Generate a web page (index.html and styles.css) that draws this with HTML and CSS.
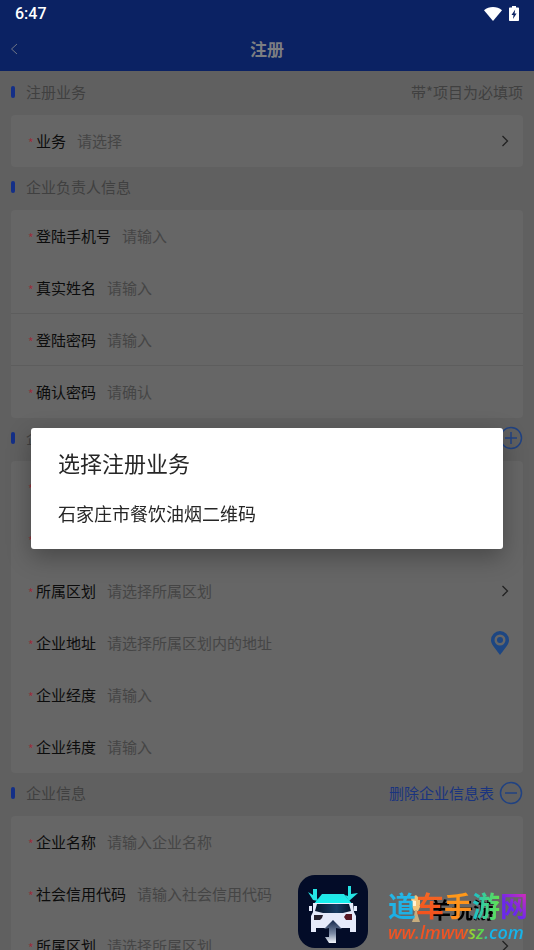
FILE: index.html
```
<!DOCTYPE html>
<html lang="zh-CN">

<head>
    <meta charset="UTF-8">
    <meta name="viewport" content="width=device-width, initial-scale=1.0">
    <title>注册</title>
    <link rel="stylesheet" href="styles.css">
</head>

<body>
    <div class="app">
        <header class="header">
            <div class="status">
                <span class="time">6:47</span>
                <svg class="wifi" viewBox="0 0 18 14"><path d="M0 3.2C5-1 13-1 18 3.2L9 14z"/></svg>
                <svg class="battery" viewBox="0 0 10 15"><path d="M3 0h4v1.5h2c.6 0 1 .4 1 1V14c0 .6-.4 1-1 1H1c-.6 0-1-.4-1-1V2.500c0-.6.4-1 1-1h2z"/><path class="bolt" d="M6.200 3.500 2.500 9h2L4 13l3.600-5.500h-2z"/></svg>
            </div>
            <div class="nav">
                <button class="back" aria-label="返回"><svg viewBox="0 0 8 12"><path d="M7 1 1.500 6 7 11"/></svg></button>
                <h1>注册</h1>
            </div>
        </header>

        <form class="form">
            <div class="title"><h2>注册业务</h2><span class="tip">带*项目为必填项</span></div>
            <div class="card">
                <div class="row">
                    <i>*</i><label for="business">业务</label><input id="business" placeholder="请选择" readonly>
                    <svg class="arrow" viewBox="0 0 8 12"><path d="M1.500 1 6.500 6l-5 5"/></svg>
                </div>
            </div>

            <div class="title"><h2>企业负责人信息</h2></div>
            <div class="card">
                <div class="row"><i>*</i><label for="phone">登陆手机号</label><input id="phone" placeholder="请输入"></div>
                <div class="row line"><i>*</i><label for="name">真实姓名</label><input id="name" placeholder="请输入"></div>
                <div class="row line"><i>*</i><label for="pwd">登陆密码</label><input id="pwd" type="password" placeholder="请输入"></div>
                <div class="row"><i>*</i><label for="pwd2">确认密码</label><input id="pwd2" type="password" placeholder="请确认"></div>
            </div>

            <div class="title">
                <h2>企业信息</h2>
                <button type="button" class="circle" aria-label="添加"><svg viewBox="0 0 24 24"><circle cx="12" cy="12" r="10.500"/><path d="M12 6v12M6 12h12"/></svg></button>
            </div>
            <div class="card">
                <div class="row"><i>*</i></div>
                <div class="row"><i>*</i></div>
                <div class="row">
                    <i>*</i><label for="area">所属区划</label><input id="area" placeholder="请选择所属区划" readonly>
                    <svg class="arrow" viewBox="0 0 8 12"><path d="M1.500 1 6.500 6l-5 5"/></svg>
                </div>
                <div class="row">
                    <i>*</i><label for="address">企业地址</label><input id="address" placeholder="请选择所属区划内的地址">
                    <svg class="pin" viewBox="0 0 18 24"><path fill-rule="evenodd" d="M9 0a9 9 0 0 1 9 9c0 4-3 7-9 15C3 16 0 13 0 9a9 9 0 0 1 9-9zm0 3.500a5.500 5.500 0 1 0 0 11 5.500 5.500 0 0 0 0-11z"/><circle cx="9" cy="9" r="3"/></svg>
                </div>
                <div class="row"><i>*</i><label for="lng">企业经度</label><input id="lng" placeholder="请输入"></div>
                <div class="row"><i>*</i><label for="lat">企业纬度</label><input id="lat" placeholder="请输入"></div>
            </div>

            <div class="title">
                <h2>企业信息</h2>
                <button type="button" class="circle">删除企业信息表<svg viewBox="0 0 24 24"><circle cx="12" cy="12" r="10.500"/><path d="M6 12h12"/></svg></button>
            </div>
            <div class="card">
                <div class="row"><i>*</i><label for="company">企业名称</label><input id="company" placeholder="请输入企业名称"></div>
                <div class="row"><i>*</i><label for="code">社会信用代码</label><input id="code" placeholder="请输入社会信用代码"></div>
                <div class="row">
                    <i>*</i><label for="area2">所属区划</label><input id="area2" placeholder="请选择所属区划" readonly>
                    <svg class="arrow" viewBox="0 0 8 12"><path d="M1.500 1 6.500 6l-5 5"/></svg>
                </div>
            </div>
        </form>
    </div>

    <div class="mask">
        <div class="dialog" role="dialog" aria-labelledby="dialog-title">
            <h2 id="dialog-title">选择注册业务</h2>
            <button class="option">石家庄市餐饮油烟二维码</button>
        </div>
    </div>

    <div class="watermark">
        <svg class="logo" viewBox="0 0 70 73">
            <defs>
                <linearGradient id="roof" x1="0" y1="0" x2="0" y2="1"><stop offset="0" stop-color="#25e5e6"/><stop offset="1" stop-color="#10f4f0"/></linearGradient>
                <linearGradient id="glass"><stop offset="0" stop-color="#07152b"/><stop offset=".6" stop-color="#173b62"/><stop offset="1" stop-color="#06142b"/></linearGradient>
                <linearGradient id="lift" x1="0" y1="0" x2="0" y2="1"><stop offset="0" stop-color="#13264a"/><stop offset=".6" stop-color="#7d8ca7"/><stop offset="1" stop-color="#f2f5fb"/></linearGradient>
            </defs>
            <rect width="70" height="73" rx="17" fill="#030c28"/>
            <path d="M24 19h22l9 11H15z" fill="url(#roof)"/>
            <path d="m10 17 5 3V14h4v9l1 3-5-1zM50 11h3v8l7-1-9 8-4-6 3 1z" fill="#25e5e6"/>
            <path d="M15 28h40l1 9 2 4v16h-6v-4H18v4h-5V41l2-4z" fill="#e5eafa"/>
            <path d="M19 29h32l2 7-8 2H25l-8-2z" fill="url(#glass)"/>
            <path d="M11 31h3v5h-3zM56 31h3v5h-3z" fill="#e5eafa"/>
            <path d="M16 40h9l-1 3-2 2h-6z" fill="#26212d"/><path d="M54 39h-6l-2 3 2 3h6z" fill="#571824"/>
            <path d="m35 45 9 9-6-1v15h-7l-4-6h4v-9l-5 1z" fill="url(#lift)"/>
        </svg>
        <div class="brand">
            <span class="under">羊玩游</span>
            <svg class="cup" viewBox="0 0 12 28"><path d="M1 3 6 0l4 4v8l-2 4H4l-2-4z" fill="#f1c47a"/><path d="M5 15h2l1 6 2 6H2l2-6z" fill="#c7ac7d"/><path d="m2 5 4 1v5H3z" fill="#fff2d4"/></svg>
            <p class="site"><span>道</span><span>车</span><span>手</span><span>游</span><span>网</span></p>
            <p class="url">ww.lmwwsz.com</p>
        </div>
    </div>
</body>

</html>
```
FILE: styles.css
```
* {
    box-sizing: border-box;
}

body {
    margin: 0;
    font-family: "Noto Sans CJK SC", sans-serif;
    font-size: 15px;
    line-height: 22px;
    background: #606060;
}

h1, h2, p {
    margin: 0;
    font-weight: normal;
}

button {
    border: none;
    padding: 0;
    background: none;
    font: inherit;
    cursor: pointer;
}

.app {
    height: 100vh;
    overflow: hidden;
}

.header {
    background: #0b2263;
}
.status {
    display: flex;
    align-items: center;
    height: 27px;
    padding: 0 15px;
    color: #fff;
}
.status svg {
    fill: #fff;
}
.time {
    flex: 1;
    font-family: Roboto, sans-serif;
    font-size: 16px;
    font-weight: 500;
}
.wifi {
    width: 18px;
    height: 14px;
    margin-right: 7px;
}
.battery {
    width: 10px;
    height: 15px;
}
.battery .bolt {
    fill: #0b2263;
}

.nav {
    display: grid;
    grid-template-columns: 1fr auto 1fr;
    align-items: center;
    height: 44px;
    padding: 0 10px 1px;
}
.nav h1 {
    font-size: 17px;
    font-weight: bold;
    color: #7c7e82;
}
.back {
    display: flex;
    justify-self: start;
}
.back svg {
    width: 8px;
    height: 12px;
    fill: none;
    stroke: #6f7686;
}

.form {
    padding: 1px 11px 0;
}
.title {
    display: flex;
    align-items: center;
    height: 43px;
    padding-bottom: 3px;
    color: #404040;
}
.title h2 {
    flex: 1;
    font-size: 15px;
}
.title::before {
    content: '';
    width: 4px;
    height: 12px;
    margin-right: 11px;
    border-radius: 2px;
    background: #142f87;
}
.circle {
    display: flex;
    align-items: center;
    gap: 5px;
    color: #1a347f;
}
.circle svg {
    width: 24px;
    height: 24px;
    fill: none;
    stroke: #204282;
    stroke-width: 1.5;
}

.card {
    border-radius: 4px;
    background: #666;
}
.row {
    display: flex;
    align-items: center;
    height: 52px;
    padding: 0 14px 0 17px;
}
.row.line {
    border-bottom: 1px solid #5d5d5d;
}
.row i {
    width: 8px;
    padding-top: 4px;
    font-size: 12px;
    font-style: normal;
    color: #98303c;
}
.row label {
    color: #0c0c0c;
}
.row input {
    flex: 1;
    min-width: 0;
    margin-left: 11px;
    padding: 0;
    border: none;
    outline: none;
    background: none;
    font: inherit;
}
.row input::placeholder {
    color: #454545;
    opacity: 1;
}
.arrow {
    width: 8px;
    height: 12px;
    fill: none;
    stroke: #222;
    stroke-width: 1.3;
}
.pin {
    width: 18px;
    height: 24px;
    fill: #1d4682;
}

.mask {
    position: fixed;
    inset: 0;
    display: flex;
    align-items: center;
    padding: 26px 31px 0;
}
.dialog {
    flex: 1;
    padding: 18px 27px 20px;
    border-radius: 3px;
    background: #fff;
    box-shadow: 0 8px 24px rgba(0, 0, 0, .3);
    color: #262626;
}
.dialog h2 {
    margin-bottom: 20px;
    font-size: 22px;
    line-height: 32px;
}
.option {
    display: block;
    font-size: 18px;
    line-height: 31px;
    color: #262626;
}

.watermark {
    position: fixed;
    right: 6px;
    bottom: 2px;
    display: flex;
    gap: 20px;
    pointer-events: none;
}
.logo {
    width: 70px;
    height: 73px;
}
.brand {
    position: relative;
    width: 140px;
    padding-top: 14px;
}
.site {
    position: relative;
    display: flex;
    font-size: 28px;
    font-weight: bold;
    line-height: 32px;
}
.site span {
    color: transparent;
    background: linear-gradient(#26b9e9, #1aaee4);
    -webkit-background-clip: text;
    background-clip: text;
}
.site span:nth-child(2) {
    background-image: linear-gradient(#f56b25, #f24b1b);
}
.site span:nth-child(3) {
    background-image: linear-gradient(#ff9b16, #ff8b20);
}
.site span:nth-child(4) {
    background-image: linear-gradient(90deg, #18bed0, #65e34b);
}
.site span:nth-child(5) {
    background-image: linear-gradient(45deg, #6b28ed 40%, #e92cae);
}
.under {
    position: absolute;
    left: 41px;
    top: 18px;
    font-size: 22px;
    font-weight: bold;
    line-height: 30px;
    color: #000;
}
.cup {
    position: absolute;
    left: 22px;
    top: 20px;
    width: 12px;
    height: 28px;
}
.url {
    font-family: "Open Sans", sans-serif;
    font-size: 18px;
    font-style: italic;
    font-weight: 600;
    line-height: 22px;
    white-space: nowrap;
    color: transparent;
    background: linear-gradient(90deg, #f25322 55%, #8fdc35 60%, #51d653 68%, #16b4ea 72%);
    -webkit-background-clip: text;
    background-clip: text;
}
```
